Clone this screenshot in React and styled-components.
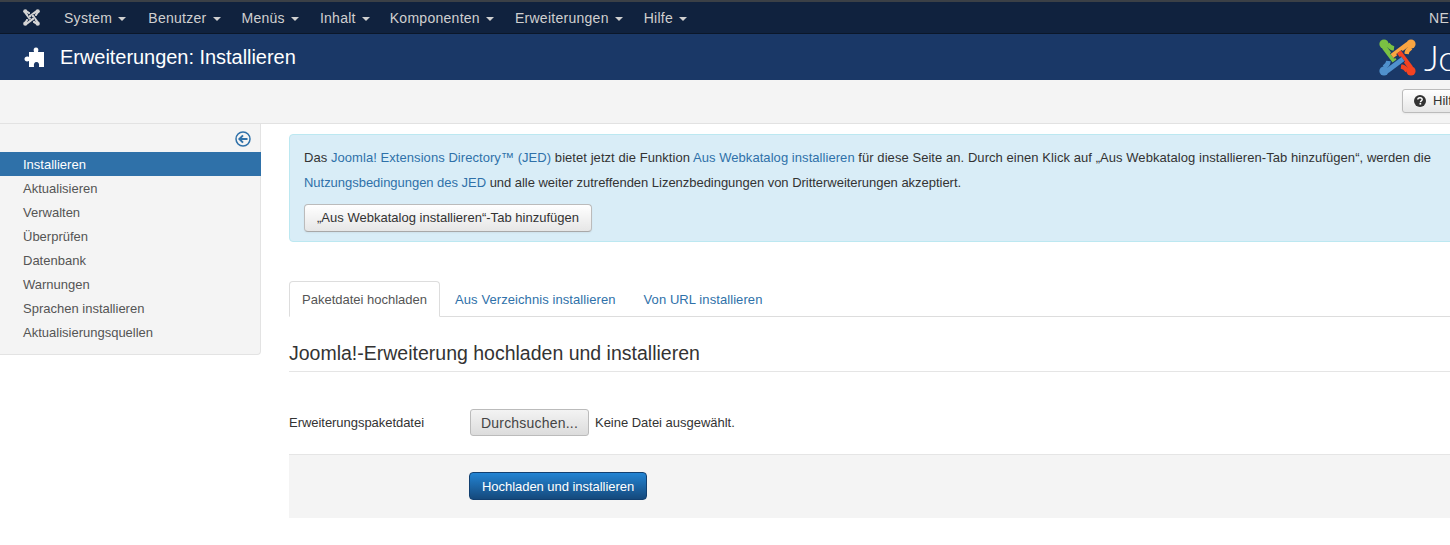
import React from "react";
import styled, { createGlobalStyle } from "styled-components";

const Global = createGlobalStyle`
  html, body { margin: 0; padding: 0; background: #fff; overflow: hidden; }
  body { font-family: "Liberation Sans", Arial, sans-serif; font-size: 13px; line-height: 18px; color: #333; }
`;
const Page = styled.div`width: 1700px; height: 545px; overflow: hidden; border-top: 2px solid #3b4046; box-sizing: border-box;`;
const TopBar = styled.nav`
  display: flex; align-items: center; height: 31px; background: #10223e; border-bottom: 1px solid #0b1729;
  padding-left: 23px; color: #d0d0d0; font-size: 14px; letter-spacing: .27px;
`;
const BrandLink = styled.span`display: flex; width: 20px; margin-right: 10px;`;
const Menu = styled.span`
  display: inline-flex; align-items: center; padding: 0 10px 0 11px; white-space: nowrap;
  &:nth-child(2) { padding-right: 11px; }
  &:nth-child(5) { padding-right: 9px; }
`;
const Caret = styled.i`
  display: inline-block; margin-left: 6px; margin-top: 2px; width: 0; height: 0;
  border-left: 4px solid transparent; border-right: 4px solid transparent; border-top: 4px solid #d0d0d0;
`;
const RightName = styled.span`margin-left: auto; width: 271px;`;
const TitleBar = styled.header`
  display: flex; align-items: center; height: 46px; background: #1a3867; padding-left: 24px; color: #fff;
`;
const TitleText = styled.h1`margin: 0 0 0 15px; font-size: 20px; font-weight: 400; line-height: 46px; letter-spacing: -.04px;`;
const LogoBox = styled.span`margin-left: auto; width: 321px; display: flex; align-items: center; gap: 8px;`;
const LogoWord = styled.span`font-family: "Lato", sans-serif; font-size: 36px; font-weight: 300; line-height: 38px; color: #fff;`;
const Toolbar = styled.div`
  display: flex; align-items: flex-start; height: 44px; box-sizing: border-box; background: #f4f4f4;
  border-bottom: 1px solid #e2e2e2; padding: 9px 0 0 1402px;
`;
const HelpButton = styled.span`
  display: flex; align-items: center; gap: 7px; height: 24px; width: 110px; box-sizing: border-box; padding-left: 11px;
  background: linear-gradient(#fff, #e6e6e6); border: 1px solid #bbb; border-radius: 3px; font-size: 13px; color: #333;
  box-shadow: 0 1px 2px rgba(0,0,0,.05);
`;
const Main = styled.div`display: flex; align-items: flex-start;`;
const Sidebar = styled.aside`
  width: 261px; height: 231px; box-sizing: border-box; flex: none; background: #f4f4f4;
  border-right: 1px solid #e3e3e3; border-bottom: 1px solid #e3e3e3; border-radius: 0 0 4px 0;
`;
const ToggleRow = styled.div`display: flex; justify-content: flex-end; height: 28px; padding: 7px 9px 0 0; box-sizing: border-box;`;
const SideItem = styled.div`
  height: 24px; line-height: 26px; padding-left: 23px; font-size: 13px; margin-right: -1px;
  color: ${(p) => (p.$active ? "#fff" : "#555")};
  background: ${(p) => (p.$active ? "#2f71a9" : "transparent")};
`;
const Content = styled.section`width: 1400px; flex: none; padding: 10px 0 0 28px; box-sizing: border-box;`;
const Notice = styled.div`
  height: 108px; box-sizing: border-box; padding: 10px 14px; background: #d9edf7; border: 1px solid #bce8f1; border-radius: 4px;
  font-size: 13px; line-height: 26px; color: #333;
`;
const Para = styled.div`white-space: nowrap; height: 26px; letter-spacing: .058px;`;
const SecondPara = styled(Para)`margin-top: -1px; letter-spacing: -.03px;`;
const A = styled.span`color: #2f71a9;`;
const LightButton = styled.span`
  display: inline-flex; align-items: center; height: 28px; box-sizing: border-box; padding: 0 12px; margin-top: 8px;
  background: linear-gradient(#fff, #e6e6e6); border: 1px solid #bbb; border-bottom-color: #a8a8a8; border-radius: 4px;
  font-size: 13px; line-height: 18px; letter-spacing: .015px; color: #333; box-shadow: 0 1px 2px rgba(0,0,0,.05);
`;
const Tabs = styled.div`display: flex; margin-top: 39px; height: 36px; box-sizing: border-box; border-bottom: 1px solid #ddd;`;
const Tab = styled.span`
  height: 36px; box-sizing: border-box; font-size: 13px;
  ${(p) => p.$active
    ? "padding: 0 12px; line-height: 36px; color: #555; background: #fff; border: 1px solid #ddd; border-bottom-color: #fff; border-radius: 4px 4px 0 0;"
    : "padding: 1px 13px 0 15px; line-height: 35px; color: #2f71a9; letter-spacing: .08px;"}
`;
const SectionTitle = styled.h2`
  margin: 0; height: 55px; box-sizing: border-box; padding-top: 24px; font-size: 19.5px; font-weight: 400; line-height: 25px; color: #333;
  border-bottom: 1px solid #e5e5e5;
`;
const FieldRow = styled.div`display: flex; align-items: center; height: 82px; padding-top: 18px; box-sizing: border-box;`;
const FieldLabel = styled.label`width: 181px; padding-top: 1px; font-size: 13px; letter-spacing: -.04px; color: #333;`;
const FileButton = styled.span`
  display: inline-flex; align-items: center; justify-content: center; width: 119px; height: 27px; padding-top: 1px; box-sizing: border-box;
  background: linear-gradient(#f3f3f3, #dcdcdc); border: 1px solid #bbb; border-radius: 3px;
  font-size: 14px; letter-spacing: .2px; color: #444;
`;
const FileHint = styled.span`margin-left: 6px; padding-top: 1px; font-size: 13px; letter-spacing: -.02px; color: #333;`;
const Actions = styled.div`
  height: 64px; box-sizing: border-box; padding: 17px 0 0 180px; background: #f4f4f4; border-top: 1px solid #e5e5e5;
`;
const PrimaryButton = styled.span`
  display: inline-flex; align-items: center; height: 28px; box-sizing: border-box; padding: 1px 12px 0;
  background: linear-gradient(#2384d3, #15497c); border: 1px solid #124070; border-radius: 4px; font-size: 13px; letter-spacing: -.04px; color: #fff;
`;

const JoomlaMark = ({ size, c, bg }) => (
  <svg width={size} height={size} viewBox="-18.5 -18.5 37 37" fill="none">
    {c.map((col, i) => (
      <g key={i} transform={`rotate(${90 * i})`}>
        <path d="M-13 -10 L-1.5 5.5" stroke={bg} strokeWidth="7" />
        <path d="M-10 -13.5 Q-7.5 -9.5 -3.5 -9" stroke={col} strokeWidth="4.6" />
        <path d="M-13.5 -10.5 L-1.5 5.5" stroke={col} strokeWidth="4.8" />
        <circle cx="-13.5" cy="-13.5" r="4.6" fill={col} />
      </g>
    ))}
  </svg>
);
const Puzzle = () => (
  <svg width="21" height="20" viewBox="0 0 21 20" fill="#fff">
    <path d="M8 5 H10 C9 2 10 .5 12 .5 C14 .5 15 2 14 5 H20 V20 H15 C15.5 16.5 14.5 15 12.5 15 C10.5 15 9.5 16.5 10 20 H5 V14 C2.5 15 .5 14 .5 12 C.5 10 2.5 9 5 10 V5 Z" />
  </svg>
);
const BackIcon = () => (
  <svg width="16" height="16" viewBox="0 0 16 16" fill="none" stroke="#2f71a9">
    <circle cx="8" cy="8" r="7" strokeWidth="1.5" />
    <path d="M12.5 8 H4.5 M8 4.4 L4.4 8 L8 11.6" strokeWidth="2" />
  </svg>
);
const HelpIcon = () => (
  <svg width="12" height="12" viewBox="0 0 12 12">
    <circle cx="6" cy="6" r="6" fill="#333" />
    <path d="M3.8 4.6 C3.8 3.4 4.8 2.7 6 2.7 C7.3 2.7 8.2 3.4 8.2 4.5 C8.2 5.9 6.4 5.8 6.4 7.2" fill="none" stroke="#fff" strokeWidth="1.4" />
    <rect x="5.5" y="8" width="1.7" height="1.6" fill="#fff" />
  </svg>
);

const menus = ["System", "Benutzer", "Menüs", "Inhalt", "Komponenten", "Erweiterungen", "Hilfe"];
const side = ["Installieren", "Aktualisieren", "Verwalten", "Überprüfen", "Datenbank", "Warnungen", "Sprachen installieren", "Aktualisierungsquellen"];
const grey = ["#d4d4d4", "#d4d4d4", "#d4d4d4", "#d4d4d4"];
const colour = ["#7ac143", "#f9a541", "#f44321", "#5091cd"];

export default function App() {
  return (
    <Page>
      <Global />
      <TopBar>
        <BrandLink><JoomlaMark size={17} c={grey} bg="#10223e" /></BrandLink>
        {menus.map((m) => (<Menu key={m}>{m}<Caret /></Menu>))}
        <RightName>NEU</RightName>
      </TopBar>
      <TitleBar>
        <Puzzle />
        <TitleText>Erweiterungen: Installieren</TitleText>
        <LogoBox><JoomlaMark size={37} c={colour} bg="#1a3867" /><LogoWord>Joomla!</LogoWord></LogoBox>
      </TitleBar>
      <Toolbar><HelpButton><HelpIcon />Hilfe</HelpButton></Toolbar>
      <Main>
        <Sidebar>
          <ToggleRow><BackIcon /></ToggleRow>
          {side.map((s, i) => (<SideItem key={s} $active={i === 0}>{s}</SideItem>))}
        </Sidebar>
        <Content>
          <Notice>
            <Para>Das <A>Joomla! Extensions Directory™ (JED)</A> bietet jetzt die Funktion <A>Aus Webkatalog installieren</A> für diese Seite an. Durch einen Klick auf „Aus Webkatalog installieren-Tab hinzufügen“, werden die</Para>
            <SecondPara><A>Nutzungsbedingungen des JED</A> und alle weiter zutreffenden Lizenzbedingungen von Dritterweiterungen akzeptiert.</SecondPara>
            <LightButton>„Aus Webkatalog installieren“-Tab hinzufügen</LightButton>
          </Notice>
          <Tabs>
            <Tab $active>Paketdatei hochladen</Tab>
            <Tab>Aus Verzeichnis installieren</Tab>
            <Tab>Von URL installieren</Tab>
          </Tabs>
          <SectionTitle>Joomla!-Erweiterung hochladen und installieren</SectionTitle>
          <FieldRow>
            <FieldLabel>Erweiterungspaketdatei</FieldLabel>
            <FileButton>Durchsuchen...</FileButton>
            <FileHint>Keine Datei ausgewählt.</FileHint>
          </FieldRow>
          <Actions><PrimaryButton>Hochladen und installieren</PrimaryButton></Actions>
        </Content>
      </Main>
    </Page>
  );
}
